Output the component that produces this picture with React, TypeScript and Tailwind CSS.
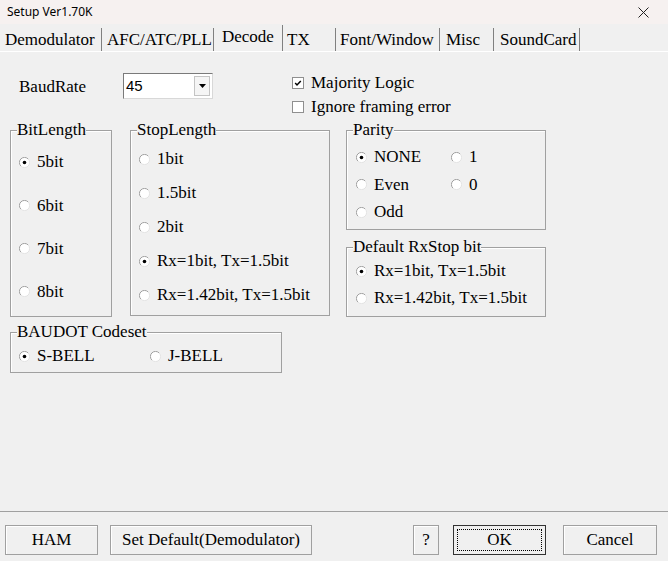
import React from "react";

// Classic Win32 "Setup" dialog, Decode tab selected.

const serif = "font-['Liberation_Serif','Times_New_Roman',serif]";

function Radio({ checked = false }: { checked?: boolean }) {
  return (
    <svg width="11" height="11" viewBox="0 0 11 11" className="shrink-0">
      <circle cx="5.5" cy="5.5" r="5" fill="#fff" />
      <path d="M1.9 9.1 A5 5 0 0 1 9.1 1.9" fill="none" stroke="#a0a0a0" strokeWidth="1" />
      <path d="M9.1 1.9 A5 5 0 0 1 1.9 9.1" fill="none" stroke="#e3e3e3" strokeWidth="1" />
      {checked && <circle cx="5.5" cy="5.5" r="1.8" fill="#000" />}
    </svg>
  );
}

function Option({ label, checked }: { label: string; checked?: boolean }) {
  return (
    <div className="flex h-[20px] items-center">
      <Radio checked={checked} />
      <span className="ml-[7px] whitespace-nowrap">{label}</span>
    </div>
  );
}

function Check({ label, checked = false }: { label: string; checked?: boolean }) {
  return (
    <div className="flex h-[20px] items-center">
      <svg width="12" height="12" viewBox="0 0 12 12" className="shrink-0">
        <rect x="0.5" y="0.5" width="11" height="11" fill="#fff" stroke="#8f8f8f" />
        {checked && (
          <path d="M3.2 6 L5 7.9 L8.8 3.9" fill="none" stroke="#000" strokeWidth="1.5" />
        )}
      </svg>
      <span className="ml-[7px] whitespace-nowrap">{label}</span>
    </div>
  );
}

function Group({
  label,
  className,
  children,
}: {
  label: string;
  className: string;
  children: React.ReactNode;
}) {
  return (
    <div
      className={
        "relative border border-[#a0a0a0] shadow-[inset_1px_1px_0_#ffffff] " + className
      }
    >
      <span className="absolute left-[6px] top-[-10px] whitespace-nowrap bg-[#f0f0f0] leading-[18px]">
        {label}
      </span>
      {children}
    </div>
  );
}

const tabs = [
  { label: "Demodulator", w: "w-[100px] pl-[3px]" },
  { label: "AFC/ATC/PLL", w: "w-[112px] pl-[5px]" },
  { label: "Decode", w: "w-[69px] pl-[8px]", active: true },
  { label: "TX", w: "w-[53px] pl-[4px]" },
  { label: "Font/Window", w: "w-[104px] pl-[4px]" },
  { label: "Misc", w: "w-[54px] pl-[6px]" },
  { label: "SoundCard", w: "w-[86px] pl-[6px]" },
];

function Button({
  label,
  className,
  focused = false,
}: {
  label: string;
  className: string;
  focused?: boolean;
}) {
  return (
    <div
      className={
        "flex h-[30px] items-center justify-center bg-[#f0f0f0] " +
        (focused
          ? "border border-[#333333] "
          : "border border-[#a0a0a0] shadow-[inset_1px_1px_0_#ffffff] ") +
        className
      }
    >
      {focused ? (
        <div className="flex h-[22px] w-[85px] items-center justify-center border border-dotted border-[#000]">
          {label}
        </div>
      ) : (
        label
      )}
    </div>
  );
}

export default function App() {
  return (
    <div
      className={
        "flex h-[561px] w-[668px] flex-col overflow-hidden bg-[#f0f0f0] text-[17px] text-black " +
        serif
      }
    >
      {/* title bar */}
      <div className="flex h-[24px] items-center bg-[#f6f1f0] pl-[7px] pr-[19px] font-['Noto_Sans',sans-serif] text-[12px]">
        <span>Setup Ver1.70K</span>
        <svg width="11" height="11" viewBox="0 0 11 11" className="ml-auto">
          <path d="M0.5 0.5 L10.5 10.5 M10.5 0.5 L0.5 10.5" stroke="#222" strokeWidth="1" />
        </svg>
      </div>

      {/* tabs */}
      <div className="flex h-[28px] items-end border-b border-white pl-[2px]">
        {tabs.map((t) => (
          <div
            key={t.label}
            className={
              t.w +
              " flex items-center whitespace-nowrap border-r border-[#808080] " +
              (t.active ? "h-[26px] pb-[2px]" : "h-[23px] pt-[1px]")
            }
          >
            {t.label}
          </div>
        ))}
      </div>

      {/* page */}
      <div className="flex flex-1 flex-col">
        <div className="mt-[21px] flex items-start">
          <div className="flex h-[26px] w-[123px] items-center pl-[19px] pt-[1px]">BaudRate</div>
          <div className="flex h-[26px] w-[90px] items-center border border-[#7a7a7a] border-b-[#d8d8d8] border-r-[#d8d8d8] bg-white pl-[2px] pr-[2px]">
            <span className="font-['Liberation_Sans',Arial,sans-serif] text-[15px]">45</span>
            <div className="ml-auto flex h-[20px] w-[16px] items-center justify-center border border-[#c4c4c4] bg-[#f5f5f5]">
              <svg width="7" height="4" viewBox="0 0 7 4">
                <path d="M0 0 L7 0 L3.5 4 Z" fill="#000" />
              </svg>
            </div>
          </div>
          <div className="ml-[79px] flex flex-col gap-[4px]">
            <Check label="Majority Logic" checked />
            <Check label="Ignore framing error" />
          </div>
        </div>

        <div className="mt-[13px] flex items-start pl-[10px]">
          <Group label="BitLength" className="h-[187px] w-[102px] pl-[8px] pt-[21px]">
            <div className="flex flex-col gap-[23.3px]">
              <Option label="5bit" checked />
              <Option label="6bit" />
              <Option label="7bit" />
              <Option label="8bit" />
            </div>
          </Group>

          <Group label="StopLength" className="ml-[18px] h-[186px] w-[200px] pl-[8px] pt-[18px]">
            <div className="flex flex-col gap-[14px]">
              <Option label="1bit" />
              <Option label="1.5bit" />
              <Option label="2bit" />
              <Option label="Rx=1bit, Tx=1.5bit" checked />
              <Option label="Rx=1.42bit, Tx=1.5bit" />
            </div>
          </Group>

          <div className="ml-[16px] flex flex-col gap-[17px]">
            <Group label="Parity" className="h-[100px] w-[200px] pl-[9px] pt-[16px]">
              <div className="grid grid-cols-[95px_auto] gap-y-[7.5px]">
                <Option label="NONE" checked />
                <Option label="1" />
                <Option label="Even" />
                <Option label="0" />
                <Option label="Odd" />
              </div>
            </Group>
            <Group label="Default RxStop bit" className="h-[70px] w-[200px] pl-[9px] pt-[13px]">
              <div className="flex flex-col gap-[7px]">
                <Option label="Rx=1bit, Tx=1.5bit" checked />
                <Option label="Rx=1.42bit, Tx=1.5bit" />
              </div>
            </Group>
          </div>
        </div>

        <div className="mt-[15px] pl-[10px]">
          <Group label="BAUDOT Codeset" className="h-[41px] w-[272px] pl-[8px] pt-[13px]">
            <div className="grid grid-cols-[131px_auto]">
              <Option label="S-BELL" checked />
              <Option label="J-BELL" />
            </div>
          </Group>
        </div>
      </div>

      {/* bottom buttons */}
      <div className="flex items-start border-t border-[#a0a0a0] pb-[6px] pl-[5px] pr-[11px] pt-[13px]">
        <Button label="HAM" className="w-[93px]" />
        <Button label="Set Default(Demodulator)" className="ml-[12px] w-[202px]" />
        <Button label="?" className="ml-auto w-[26px]" />
        <Button label="OK" className="ml-[14px] w-[93px]" focused />
        <Button label="Cancel" className="ml-[17px] w-[94px]" />
      </div>
    </div>
  );
}
